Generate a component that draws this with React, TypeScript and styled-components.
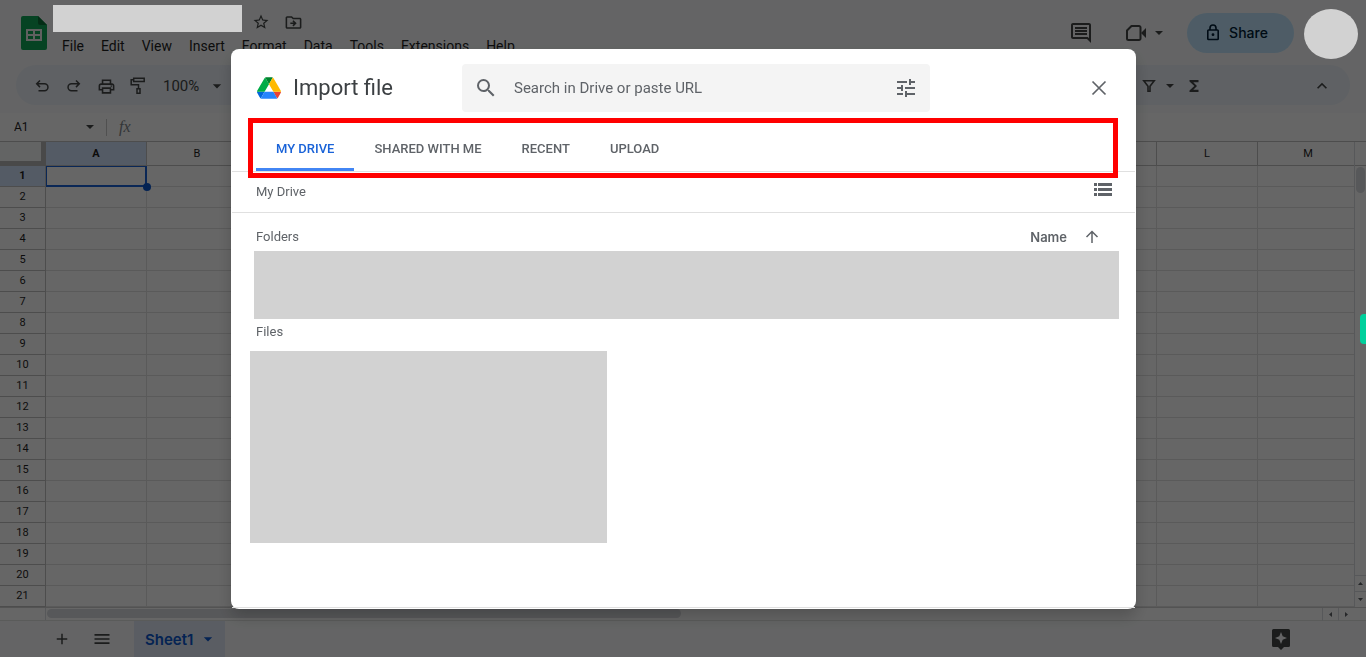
import React from "react";
import styled, { createGlobalStyle } from "styled-components";
import {
  MdStarOutline,
  MdOutlineDriveFileMove,
  MdOutlinePrint,
  MdOutlineInsertComment,
  MdSearch,
  MdTune,
  MdFunctions,
  MdArrowDropDown,
  MdAdd,
  MdMenu,
  MdKeyboardArrowUp,
} from "react-icons/md";

const GlobalStyle = createGlobalStyle`
  *, *::before, *::after { box-sizing: border-box; }
  body {
    margin: 0;
    background: #f9fbfd;
    color: #1f1f1f;
    font-family: Roboto, "Liberation Sans", sans-serif;
    font-size: 14px;
    overflow: hidden;
  }
  button, input { font: inherit; color: inherit; }
  button { border: 0; padding: 0; background: none; cursor: pointer; }
`;

const Page = styled.div`
  display: flex;
  flex-direction: column;
  min-height: 100vh;
`;

const Header = styled.header`
  display: flex;
  align-items: flex-start;
  height: 65px;
  padding: 0 8px 0 16px;
`;

const LogoLink = styled.a`
  display: flex;
  padding: 16px 1px 0 5px;
  margin-right: 5px;
`;

const TitleBlock = styled.div`
  flex: 1;
  min-width: 0;
  padding-top: 5px;
`;

const TitleRow = styled.div`
  display: flex;
  align-items: center;
  gap: 9px;
  height: 27px;
`;

const Redacted = styled.div`
  position: relative;
  z-index: 2;
  background: #d2d2d2;
`;

const TitleRedacted = styled(Redacted)`
  width: 189px;
  height: 27px;
`;

const AvatarRedacted = styled(Redacted)`
  width: 54px;
  height: 50px;
  margin: 9px 0 0 10px;
  border-radius: 50%;
`;

const IconButton = styled.button<{ $w?: number; $h?: number }>`
  display: inline-flex;
  flex: none;
  align-items: center;
  justify-content: center;
  width: ${(p) => p.$w ?? 32}px;
  height: ${(p) => p.$h ?? 32}px;
  color: #444746;
`;

const DialogIconButton = styled(IconButton)`
  color: #5f6368;
`;

const TitleIcons = styled.div`
  display: flex;
  padding-top: 7px;
`;

const MenuBar = styled.nav`
  display: flex;
  gap: 1px;
  height: 28px;
  padding-left: 1px;
`;

const MenuItem = styled.button`
  padding: 0 8px;
  font-size: 14px;
  line-height: 28px;
`;

const HeaderActions = styled.div`
  display: flex;
  align-items: flex-start;
`;

const ActionGroup = styled.div`
  display: flex;
  align-items: center;
  height: 66px;
`;

const ShareButton = styled.button`
  display: flex;
  align-items: center;
  justify-content: center;
  gap: 9px;
  width: 107px;
  height: 40px;
  margin: 13px 0 0 22px;
  padding: 0 7px 2px 0;
  border-radius: 20px;
  background: #c2e7ff;
  color: #001d35;
  font-family: Inter, sans-serif;
  font-weight: 500;
`;

const Toolbar = styled.div`
  display: flex;
  align-items: center;
  height: 40px;
  margin: 0 16px 8px;
  padding: 2px 12px 0 10px;
  border-radius: 20px;
  background: #edf2fa;
`;

const Zoom = styled.button`
  display: flex;
  align-items: center;
  margin-left: 9px;
  gap: 8px;
  color: #444746;
  font-size: 15px;
`;

const Spacer = styled.div`
  flex: 1;
`;

const ToolbarGap = styled.div`
  width: 96px;
`;

const FormulaBar = styled.div`
  display: flex;
  align-items: center;
  height: 29px;
  border-bottom: 1px solid #c0c0c0;
  background: #fff;
`;

const NameBox = styled.input`
  width: 82px;
  padding: 0 0 0 14px;
  border: 0;
  background: none;
  font-size: 12px;
  line-height: 20px;
`;

const FxDivider = styled.span`
  width: 1px;
  height: 17px;
  margin: 0 12px 0 8px;
  background: #c7c7c7;
`;

const Fx = styled.span`
  color: #80868b;
  font-family: "Liberation Serif", serif;
  font-size: 16px;
  font-style: italic;
  font-weight: 400;
`;

const Workspace = styled.div`
  display: flex;
  background: #fff;
`;

const GridViewport = styled.div`
  flex: 1;
  min-width: 0;
  overflow: hidden;
`;

const Grid = styled.table`
  width: 1359px;
  table-layout: fixed;
  border-collapse: separate;
  border-spacing: 0;
`;

const RowHeadCol = styled.col`
  width: 46px;
`;

const Corner = styled.td`
  height: 24px;
  padding: 0;
  border-right: 5px solid #b7b7b7;
  border-bottom: 5px solid #b7b7b7;
  background: #f8f9fa;
`;

const ColHead = styled.th<{ $active: boolean }>`
  height: 24px;
  padding: 0;
  border-right: 1px solid #c0c0c0;
  border-bottom: 1px solid #c0c0c0;
  background: ${(p) => (p.$active ? "#d3e3fd" : "#fff")};
  font-size: 11px;
  font-weight: ${(p) => (p.$active ? 700 : 400)};
`;

const RowHead = styled(ColHead)`
  height: 21px;
  line-height: 18px;
`;

const Cell = styled.td<{ $selected: boolean }>`
  position: relative;
  height: 21px;
  padding: 0;
  border-right: 1px solid ${(p) => (p.$selected ? "#1a63d8" : "#e1e1e1")};
  border-bottom: 1px solid ${(p) => (p.$selected ? "#1a63d8" : "#e1e1e1")};
  ${(p) => p.$selected && "box-shadow: inset 0 0 0 1px #1a63d8;"}
`;

const FillHandle = styled.span`
  position: absolute;
  right: -5px;
  bottom: -5px;
  z-index: 1;
  width: 8px;
  height: 8px;
  border-radius: 50%;
  background: #0b57d0;
`;

const VerticalScroll = styled.div`
  display: flex;
  flex-direction: column;
  width: 12px;
  border-left: 1px solid #dadce0;
`;

const VerticalHead = styled.div`
  height: 24px;
  border-bottom: 1px solid #c0c0c0;
`;

const VerticalThumb = styled.div`
  width: 9px;
  height: 26px;
  margin: 1px 0 0 1px;
  border-radius: 5px;
  background: #dadce0;
`;

const ScrollButton = styled.button`
  display: flex;
  align-items: center;
  justify-content: center;
  width: 16px;
  height: 13px;
  border-left: 1px solid #dadce0;
  color: #5f6368;
`;

const VerticalScrollButton = styled(ScrollButton)`
  width: 11px;
  height: 16px;
  border-top: 1px solid #dadce0;
  border-left: 0;
`;

const HorizontalScroll = styled.div`
  display: flex;
  height: 14px;
  padding: 0 12px 0 45px;
  border-top: 1px solid #d0d0d0;
  border-bottom: 1px solid #e1e3e1;
  background: #fff;
`;

const HorizontalTrack = styled.div`
  flex: 1;
  padding: 1px 0 0 1px;
  border-left: 1px solid #dadce0;
`;

const HorizontalThumb = styled.div`
  width: 50%;
  max-width: 634px;
  height: 9px;
  border-radius: 5px;
  background: #dadce0;
`;

const SheetBar = styled.footer`
  display: flex;
  flex: 1;
  align-items: center;
  min-height: 36px;
  padding: 0 69px 0 42px;
`;

const SheetTab = styled.button`
  display: flex;
  align-items: center;
  align-self: stretch;
  gap: 5px;
  width: 91px;
  margin-left: 12px;
  padding-left: 11px;
  background: #e1e9f7;
  color: #0b57d0;
  font-family: Inter, sans-serif;
  font-size: 15px;
  font-weight: 600;
`;

const SideTab = styled.button`
  position: fixed;
  top: 314px;
  right: 0;
  z-index: 2;
  width: 6px;
  height: 30px;
  border-radius: 4px 0 0 4px;
  background: #00d09c;
`;

const Scrim = styled.div`
  position: fixed;
  inset: 0;
  z-index: 1;
  display: flex;
  align-items: center;
  justify-content: center;
  padding: 1px 0 0 1px;
  background: rgba(0, 0, 0, 0.6);
`;

const Dialog = styled.section`
  display: flex;
  flex-direction: column;
  width: 905px;
  max-width: 100%;
  height: 560px;
  padding: 15px 1px 1px;
  border-radius: 8px;
  background: #fff;
  color: #5f6368;
  box-shadow: 0 8px 16px rgba(0, 0, 0, 0.2);
`;

const DialogHeader = styled.div`
  display: flex;
  align-items: center;
  height: 48px;
  padding: 0 20px 0 25px;
`;

const DialogTitle = styled.h1`
  width: 169px;
  margin: 0 0 0 12px;
  padding-bottom: 2px;
  color: #3c4043;
  font-size: 22px;
  font-weight: 400;
`;

const SearchBox = styled.label`
  display: flex;
  align-items: center;
  width: 468px;
  height: 48px;
  padding: 0 8px 0 12px;
  border-radius: 4px;
  background: #f4f4f4;
`;

const SearchInput = styled.input`
  flex: 1;
  min-width: 0;
  margin-left: 16px;
  padding: 0;
  border: 0;
  background: none;
  font-size: 15px;
  &::placeholder { color: #5f6368; opacity: 1; }
`;

const Tabs = styled.div`
  position: relative;
  display: flex;
  height: 60px;
  padding: 12px 24px 0;
  border-bottom: 1px solid #e0e0e0;
`;

const Tab = styled.button<{ $active: boolean }>`
  padding: 5px 20px 0;
  border-bottom: 3px solid ${(p) => (p.$active ? "#4285f4" : "transparent")};
  color: ${(p) => (p.$active ? "#1a63d8" : "#5f6368")};
  font-size: 13px;
  font-weight: 500;
`;

const Highlight = styled.div`
  position: absolute;
  inset: 6px 17px -7px 16px;
  border: 5px solid #f00;
  pointer-events: none;
`;

const PathRow = styled.div`
  display: flex;
  align-items: flex-start;
  justify-content: space-between;
  height: 41px;
  padding: 0 16px 0 24px;
  border-bottom: 1px solid #e0e0e0;
  font-size: 13px;
  line-height: 40px;
`;

const Listing = styled.div`
  flex: 1;
  border-bottom: 1px solid #e0e0e0;
  font-size: 13px;
`;

const SectionHead = styled.div`
  display: flex;
  align-items: center;
  justify-content: space-between;
  height: 38px;
  padding: 10px 34px 0 24px;
`;

const SectionTitle = styled.h2`
  margin: 0;
  font-size: 13px;
  font-weight: 400;
  line-height: 16px;
`;

const SortButton = styled.button`
  display: flex;
  align-items: center;
  gap: 16px;
  font-family: Inter, sans-serif;
  font-size: 13px;
  font-weight: 600;
`;

const FolderArea = styled.div`
  height: 68px;
  margin: 0 16px 0 22px;
  background: #d2d2d2;
`;

const FilesHead = styled(SectionHead)`
  height: 32px;
  padding: 0 34px 6px 24px;
`;

const FileArea = styled.div`
  width: 357px;
  height: 192px;
  margin-left: 18px;
  background: #d2d2d2;
`;

const SheetsLogo = () => (
  <svg width="26" height="34" viewBox="0 0 26 34" aria-hidden="true">
    <path d="M2 0H17l9 9v23a2 2 0 0 1-2 2H2a2 2 0 0 1-2-2V2a2 2 0 0 1 2-2z" fill="#0fa958" />
    <path d="M17 0l9 9h-7a2 2 0 0 1-2-2z" fill="#0a7038" />
    <path d="M5 13h16v12H5zm2 2v3h5v-3zm7 0v3h5v-3zm-7 5v3h5v-3zm7 0v3h5v-3z" fill="#f1f1f1" fillRule="evenodd" />
  </svg>
);

const DriveLogo = () => (
  <svg width="24" height="22" viewBox="0 0 87.3 78" aria-hidden="true">
    <path d="M6.600 66.850l3.850 6.650c.8 1.400 1.950 2.500 3.300 3.300l13.750-23.800H0c0 1.550.4 3.100 1.200 4.500z" fill="#0066da" />
    <path d="M43.650 25L29.900 1.200c-1.350.8-2.500 1.900-3.300 3.300L1.200 48.500A9.060 9.060 0 0 0 0 53h27.500z" fill="#00ac47" />
    <path d="M73.550 76.800c1.350-.8 2.500-1.900 3.300-3.300l1.600-2.750L86.100 57.500c.8-1.400 1.200-2.950 1.200-4.500H59.800l5.850 11.500z" fill="#ea4335" />
    <path d="M43.650 25L57.400 1.200C56.050.4 54.500 0 52.900 0H34.400c-1.600 0-3.150.45-4.500 1.200z" fill="#00832d" />
    <path d="M59.800 53H27.500L13.750 76.800c1.350.8 2.900 1.200 4.500 1.200h50.800c1.600 0 3.150-.45 4.500-1.200z" fill="#2684fc" />
    <path d="M73.400 26.500L60.700 4.500c-.8-1.400-1.950-2.500-3.300-3.300L43.650 25 59.800 53h27.450c0-1.550-.4-3.100-1.200-4.500z" fill="#ffba00" />
  </svg>
);

const UndoIcon = ({ flip }: { flip?: boolean }) => (
  <svg width="18" height="18" viewBox="0 0 18 18" fill="none" stroke="currentColor" strokeWidth="1.500" aria-hidden="true">
    <path
      transform={flip ? "matrix(-1 0 0 1 18 0)" : undefined}
      d="M7 3.500L3.700 6.800 7 10.100M4 6.800h7.500a3.100 3.100 0 0 1 0 6.900H5.500"
    />
  </svg>
);

const RollerIcon = () => (
  <svg width="18" height="18" viewBox="0 0 18 18" fill="none" stroke="currentColor" strokeWidth="1.500" aria-hidden="true">
    <path d="M4.700 1.200h10.500v3.300H4.700zM4.700 2.800H2.200v5h7.300v3.700M8 11.700h3v4.600H8z" />
  </svg>
);

const VideoIcon = () => (
  <svg width="22" height="18" viewBox="0 0 22 18" aria-hidden="true">
    <path d="M6.500 2H14a1.500 1.500 0 0 1 1.500 1.500v11A1.500 1.500 0 0 1 14 16H3.500A1.500 1.500 0 0 1 2 14.500v-8z" fill="none" stroke="currentColor" strokeWidth="2" strokeLinejoin="round" />
    <path d="M16 9l5-5v10z" fill="currentColor" />
  </svg>
);

const LockIcon = () => (
  <svg width="14" height="17" viewBox="0 0 14 17" fill="none" stroke="currentColor" strokeWidth="1.600" aria-hidden="true">
    <rect x="1.800" y="6" width="10.400" height="9.500" rx="0.800" />
    <path d="M4 6V4a3 3 0 0 1 6 0v2" />
    <circle cx="7" cy="10.700" r="1.400" fill="currentColor" stroke="none" />
  </svg>
);

const FilterIcon = () => (
  <svg width="14" height="14" viewBox="0 0 14 14" fill="none" stroke="currentColor" strokeWidth="1.600" aria-hidden="true">
    <path d="M1.800 1.800h10.400L8 7.200v5H6v-5z" />
  </svg>
);

const CloseIcon = () => (
  <svg width="16" height="16" viewBox="0 0 16 16" fill="none" stroke="currentColor" strokeWidth="1.700" aria-hidden="true">
    <path d="M1.500 1.500l13 13M14.500 1.500l-13 13" />
  </svg>
);

const SortUpIcon = () => (
  <svg width="18" height="18" viewBox="0 0 18 18" fill="none" stroke="currentColor" strokeWidth="1.500" aria-hidden="true">
    <path d="M9 15V4M3.500 9L9 3.500 14.500 9" />
  </svg>
);

const ListIcon = () => (
  <svg width="18" height="13" viewBox="0 0 18 13" fill="currentColor" aria-hidden="true">
    <path d="M0 0h3v3H0zM4 0h14v3H4zM0 5h3v3H0zM4 5h14v3H4zM0 10h3v3H0zM4 10h14v3H4z" />
  </svg>
);

const ExploreIcon = () => (
  <svg width="18" height="21" viewBox="0 0 18 21" aria-hidden="true">
    <path
      d="M1.500 0h15A1.500 1.500 0 0 1 18 1.500v15a1.500 1.500 0 0 1-1.500 1.500H12l-3 3-3-3H1.500A1.500 1.500 0 0 1 0 16.500v-15A1.500 1.500 0 0 1 1.500 0zM9 3L7.300 7.300 3 9l4.300 1.700L9 15l1.700-4.300L15 9l-4.300-1.700z"
      fill="currentColor"
      fillRule="evenodd"
    />
  </svg>
);

const Caret = () => (
  <svg width="8" height="4" viewBox="0 0 8 4" fill="currentColor" aria-hidden="true">
    <path d="M0 0h8L4 4z" />
  </svg>
);

const Arrow = ({ d }: { d: string }) => (
  <svg width="5" height="5" viewBox="0 0 5 5" fill="currentColor" aria-hidden="true">
    <path d={d} />
  </svg>
);

const MENUS = ["File", "Edit", "View", "Insert", "Format", "Data", "Tools", "Extensions", "Help"];
const COLUMNS = "ABCDEFGHIJKLM".split("");
const ROWS = Array.from({ length: 21 }, (_, i) => i + 1);
const TABS = ["MY DRIVE", "SHARED WITH ME", "RECENT", "UPLOAD"];

export default function App() {
  return (
    <>
      <GlobalStyle />
      <Page>
        <Header>
          <LogoLink href="#" aria-label="Sheets home"><SheetsLogo /></LogoLink>
          <TitleBlock>
            <TitleRow>
              <TitleRedacted />
              <TitleIcons>
                <IconButton $w={20} aria-label="Star"><MdStarOutline size={18} /></IconButton>
                <IconButton $w={44} aria-label="Move"><MdOutlineDriveFileMove size={19} /></IconButton>
              </TitleIcons>
            </TitleRow>
            <MenuBar>
              {MENUS.map((m) => <MenuItem key={m}>{m}</MenuItem>)}
            </MenuBar>
          </TitleBlock>
          <HeaderActions>
            <ActionGroup>
              <IconButton $w={76} aria-label="Comments"><MdOutlineInsertComment size={24} /></IconButton>
              <IconButton $w={34} aria-label="Join a call"><VideoIcon /></IconButton>
              <IconButton $w={12} aria-label="Call options"><Caret /></IconButton>
            </ActionGroup>
            <ShareButton><LockIcon />Share</ShareButton>
            <AvatarRedacted />
          </HeaderActions>
        </Header>

        <Toolbar>
          <IconButton aria-label="Undo"><UndoIcon /></IconButton>
          <IconButton aria-label="Redo"><UndoIcon flip /></IconButton>
          <IconButton aria-label="Print"><MdOutlinePrint size={19} /></IconButton>
          <IconButton aria-label="Paint format"><RollerIcon /></IconButton>
          <Zoom>100%<MdArrowDropDown size={20} /></Zoom>
          <Spacer />
          <IconButton $w={26} aria-label="Create a filter"><FilterIcon /></IconButton>
          <IconButton $w={16} aria-label="Filter options"><Caret /></IconButton>
          <IconButton aria-label="Functions"><MdFunctions size={18} /></IconButton>
          <ToolbarGap />
          <IconButton aria-label="Hide the menus"><MdKeyboardArrowUp size={20} /></IconButton>
        </Toolbar>

        <FormulaBar>
          <NameBox defaultValue="A1" aria-label="Name box" />
          <IconButton $w={16} $h={20} aria-label="Named ranges"><Caret /></IconButton>
          <FxDivider />
          <Fx>fx</Fx>
        </FormulaBar>

        <Workspace>
          <GridViewport>
            <Grid>
              <colgroup>
                <RowHeadCol />
                {COLUMNS.map((c) => <col key={c} />)}
              </colgroup>
              <thead>
                <tr>
                  <Corner />
                  {COLUMNS.map((c) => <ColHead key={c} scope="col" $active={c === "A"}>{c}</ColHead>)}
                </tr>
              </thead>
              <tbody>
                {ROWS.map((r) => (
                  <tr key={r}>
                    <RowHead scope="row" $active={r === 1}>{r}</RowHead>
                    {COLUMNS.map((c) => {
                      const selected = r === 1 && c === "A";
                      return <Cell key={c} $selected={selected}>{selected && <FillHandle />}</Cell>;
                    })}
                  </tr>
                ))}
              </tbody>
            </Grid>
          </GridViewport>
          <VerticalScroll>
            <VerticalHead />
            <VerticalThumb />
            <Spacer />
            <VerticalScrollButton aria-label="Scroll up"><Arrow d="M0 4h5L2.500 1z" /></VerticalScrollButton>
            <VerticalScrollButton aria-label="Scroll down"><Arrow d="M0 1h5L2.500 4z" /></VerticalScrollButton>
          </VerticalScroll>
        </Workspace>
        <HorizontalScroll>
          <HorizontalTrack><HorizontalThumb /></HorizontalTrack>
          <ScrollButton aria-label="Scroll left"><Arrow d="M4 0v5L1 2.500z" /></ScrollButton>
          <ScrollButton aria-label="Scroll right"><Arrow d="M1 0v5l3-2.500z" /></ScrollButton>
        </HorizontalScroll>

        <SheetBar>
          <IconButton $w={40} aria-label="Add sheet"><MdAdd size={18} /></IconButton>
          <IconButton $w={40} aria-label="All sheets"><MdMenu size={20} /></IconButton>
          <SheetTab>Sheet1<MdArrowDropDown size={20} /></SheetTab>
          <Spacer />
          <IconButton aria-label="Explore"><ExploreIcon /></IconButton>
        </SheetBar>
      </Page>

      <SideTab aria-label="Open side panel" />

      <Scrim>
        <Dialog role="dialog" aria-label="Import file">
          <DialogHeader>
            <DriveLogo />
            <DialogTitle>Import file</DialogTitle>
            <SearchBox>
              <MdSearch size={24} />
              <SearchInput placeholder="Search in Drive or paste URL" aria-label="Search in Drive or paste URL" />
              <DialogIconButton aria-label="Search options"><MdTune size={24} /></DialogIconButton>
            </SearchBox>
            <Spacer />
            <DialogIconButton aria-label="Close"><CloseIcon /></DialogIconButton>
          </DialogHeader>
          <Tabs role="tablist">
            {TABS.map((t, i) => (
              <Tab key={t} role="tab" aria-selected={i === 0} $active={i === 0}>{t}</Tab>
            ))}
            <Highlight />
          </Tabs>
          <PathRow>
            <span>My Drive</span>
            <DialogIconButton $h={35} aria-label="List view"><ListIcon /></DialogIconButton>
          </PathRow>
          <Listing>
            <SectionHead>
              <SectionTitle>Folders</SectionTitle>
              <SortButton>Name<SortUpIcon /></SortButton>
            </SectionHead>
            <FolderArea />
            <FilesHead><SectionTitle>Files</SectionTitle></FilesHead>
            <FileArea />
          </Listing>
        </Dialog>
      </Scrim>
    </>
  );
}
